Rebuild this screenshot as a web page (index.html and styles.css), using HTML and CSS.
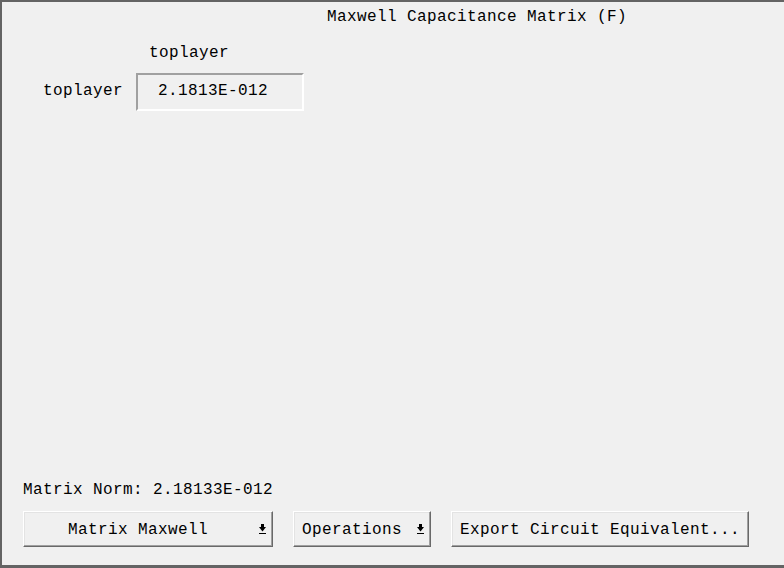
FILE: index.html
```html
<!DOCTYPE html>
<html>
<head>
<meta charset="utf-8">
<link rel="stylesheet" href="styles.css">
</head>
<body>
<div class="window">
  <div class="title">Maxwell Capacitance Matrix (F)</div>
  <div class="matrix">
    <div class="corner"></div>
    <div class="col-head">toplayer</div>
    <div class="row-head">toplayer</div>
    <div class="cell">2.1813E-012</div>
  </div>
  <div class="spacer"></div>
  <div class="norm">Matrix Norm: 2.18133E-012</div>
  <div class="actions">
    <button class="btn btn-matrix"><span class="label">Matrix Maxwell</span><svg class="arrow" width="7" height="10" viewBox="0 0 7 10"><rect x="2" y="0" width="3" height="4" fill="#000"/><polygon points="0,3 7,3 3.5,7.5" fill="#000"/><rect x="0" y="9" width="7" height="1" fill="#000"/></svg></button>
    <button class="btn btn-ops"><span class="label">Operations</span><svg class="arrow" width="7" height="10" viewBox="0 0 7 10"><rect x="2" y="0" width="3" height="4" fill="#000"/><polygon points="0,3 7,3 3.5,7.5" fill="#000"/><rect x="0" y="9" width="7" height="1" fill="#000"/></svg></button>
    <button class="btn btn-export"><span class="label">Export Circuit Equivalent...</span></button>
  </div>
</div>
</body>
</html>
```

FILE: styles.css
```css
html, body {
  margin: 0;
  padding: 0;
  background: #f0f0f0;
}

.window {
  box-sizing: border-box;
  width: 784px;
  height: 568px;
  border-top: 2px solid #646464;
  border-left: 2px solid #646464;
  border-bottom: 3px solid #646464;
  background: #f0f0f0;
  display: flex;
  flex-direction: column;
  font-family: "Liberation Mono", "Courier New", monospace;
  font-size: 16px;
  letter-spacing: 0.4px;
  line-height: 18px;
  color: #000;
}

.title {
  margin-top: 6px;
  padding-left: 325px;
  white-space: pre;
}

.matrix {
  margin-top: 18px;
  padding-left: 41px;
  display: grid;
  grid-template-columns: 93px 168px;
  row-gap: 11px;
}

.col-head {
  padding-left: 13px;
}

.row-head {
  align-self: center;
  padding-bottom: 2px;
}

.cell {
  box-sizing: border-box;
  height: 38px;
  border-style: solid;
  border-width: 2px;
  border-color: #a0a0a0 #ffffff #ffffff #a0a0a0;
  display: flex;
  align-items: center;
  padding-left: 20px;
  padding-bottom: 2px;
}

.spacer {
  flex: 1;
}

.norm {
  padding-left: 21px;
  padding-top: 1px;
  margin-bottom: -1px;
  white-space: pre;
}

.actions {
  margin-top: 13px;
  margin-bottom: 18px;
  padding-left: 21px;
  display: flex;
  gap: 20px;
}

.btn {
  box-sizing: border-box;
  height: 36px;
  margin: 0;
  padding: 0;
  border: 1px solid;
  border-color: #ffffff #696969 #696969 #ffffff;
  box-shadow: inset -1px -1px 0 #a0a0a0, inset 1px 1px 0 #e3e3e3;
  background: #f0f0f0;
  display: flex;
  align-items: center;
  font: inherit;
  letter-spacing: inherit;
  color: #000;
  text-align: left;
}

.label {
  white-space: pre;
  padding-top: 1px;
}

.arrow {
  margin-left: auto;
  margin-right: 6px;
  flex: none;
}

.btn-matrix {
  width: 250px;
  padding-left: 44px;
}

.btn-ops {
  width: 138px;
  padding-left: 8px;
}

.btn-export {
  width: 298px;
  padding-left: 8px;
}
```
